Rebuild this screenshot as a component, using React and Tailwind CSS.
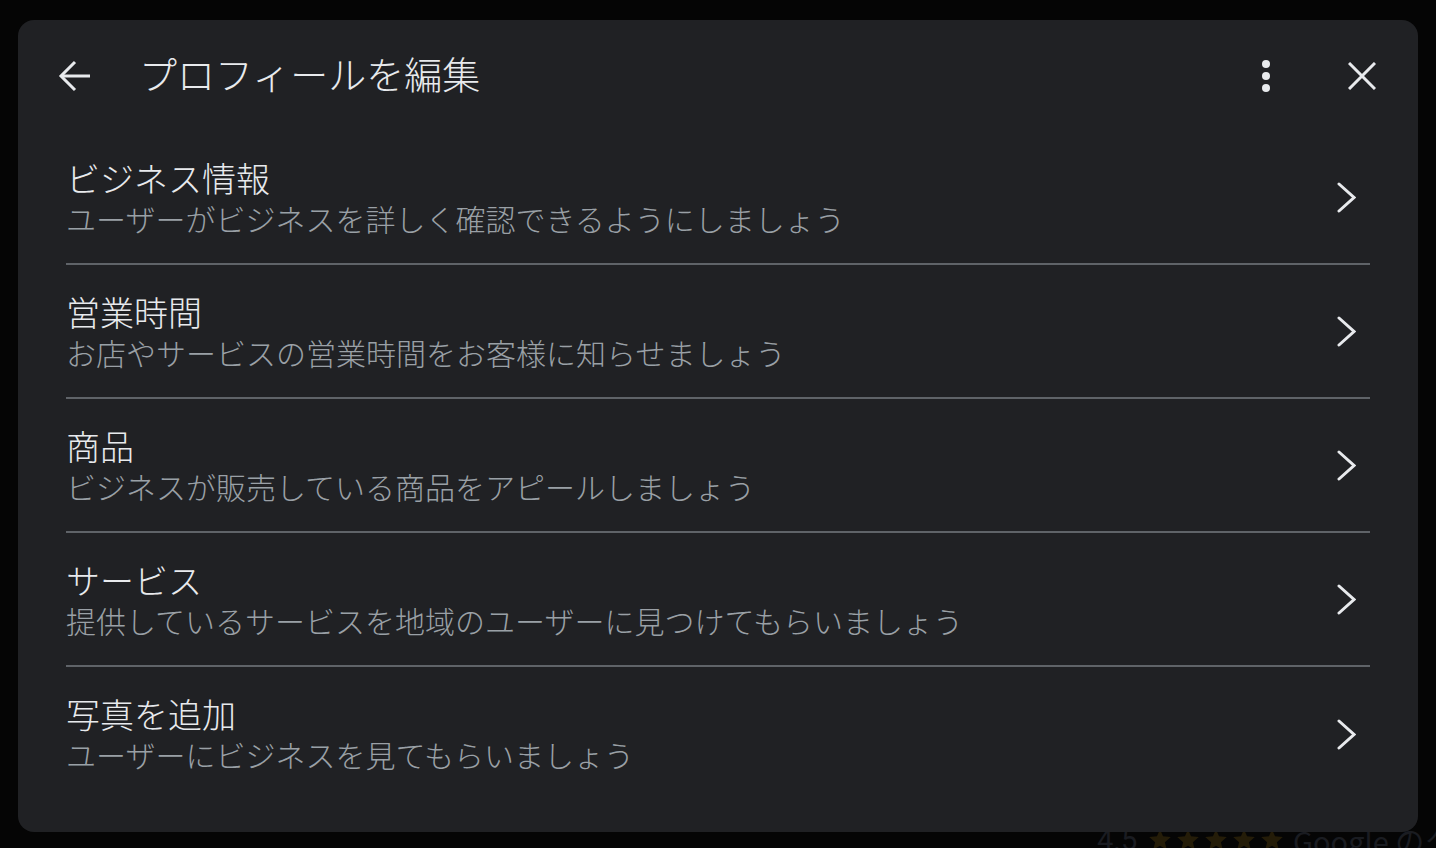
import React from "react";

const rows = [
  { title: "ビジネス情報", sub: "ユーザーがビジネスを詳しく確認できるようにしましょう" },
  { title: "営業時間", sub: "お店やサービスの営業時間をお客様に知らせましょう" },
  { title: "商品", sub: "ビジネスが販売している商品をアピールしましょう" },
  { title: "サービス", sub: "提供しているサービスを地域のユーザーに見つけてもらいましょう" },
  { title: "写真を追加", sub: "ユーザーにビジネスを見てもらいましょう" },
];

function BackArrow() {
  return (
    <svg width="32" height="32" viewBox="0 0 32 32" fill="none" stroke="#e8eaed" strokeWidth="3" strokeLinecap="butt">
      <path d="M32 16H3" />
      <path d="M17 2L3 16l14 14" />
    </svg>
  );
}

function Kebab() {
  return (
    <div className="flex flex-col gap-[4px]">
      <span className="w-[8px] h-[8px] rounded-full bg-[#e8eaed]" />
      <span className="w-[8px] h-[8px] rounded-full bg-[#e8eaed]" />
      <span className="w-[8px] h-[8px] rounded-full bg-[#e8eaed]" />
    </div>
  );
}

function CloseX() {
  return (
    <svg width="28" height="28" viewBox="0 0 28 28" fill="none" stroke="#e8eaed" strokeWidth="3">
      <path d="M1 1L27 27M27 1L1 27" />
    </svg>
  );
}

function Chevron() {
  return (
    <svg width="19" height="31" viewBox="0 0 19 31" fill="none" stroke="#e8eaed" strokeWidth="3" strokeLinecap="round">
      <path d="M2 2l15 13.5L2 29" />
    </svg>
  );
}

function Star() {
  return (
    <svg width="26" height="26" viewBox="0 0 24 24" fill="#241c08" className="shrink-0">
      <path d="M12 17.27L18.18 21l-1.64-7.03L22 9.24l-7.19-.61L12 2 9.19 8.63 2 9.24l5.46 4.73L5.82 21z" />
    </svg>
  );
}

export default function App() {
  return (
    <div
      className="relative w-[1436px] h-[848px] bg-[#050505] overflow-hidden flex flex-col justify-end"
      style={{ fontFamily: '"Noto Sans CJK JP", "Noto Sans", sans-serif' }}
    >
      {/* dimmed page behind the dialog */}
      <div className="flex items-center pl-[1097px] translate-y-[12px] text-[#1a1c21] text-[29px] leading-[40px] whitespace-nowrap">
        <span className="w-[50px] shrink-0" style={{ fontFamily: "Roboto, sans-serif" }}>4.5</span>
        <div className="flex gap-[2px] w-[146px] shrink-0">
          <Star />
          <Star />
          <Star />
          <Star />
          <Star />
        </div>
        <span className="shrink-0">Google のクチコミ</span>
      </div>

      <div className="absolute left-[18px] top-[20px] w-[1400px] h-[812px] rounded-2xl bg-[#202124] flex flex-col">
        <div className="h-[111px] flex items-center pl-[40px] pr-[42px]">
          <BackArrow />
          <h1 className="ml-[49px] -mt-[6px] text-[38px] leading-[48px] text-[#e8eaed] font-light">プロフィールを編集</h1>
          <div className="flex-1" />
          <Kebab />
          <div className="ml-[78px]">
            <CloseX />
          </div>
        </div>

        <div className="px-[48px] flex flex-col">
          {rows.map((r, i) => (
            <div
              key={r.title}
              className={
                "h-[134px] flex items-center " +
                (i < rows.length - 1 ? "border-b-2 border-[#5f6368]" : "")
              }
            >
              <div className="flex-1 self-start pt-[27px]">
                <div className="text-[34px] leading-[40px] text-[#e8eaed] font-light">{r.title}</div>
                <div className="text-[30px] leading-[40px] text-[#9aa0a6] font-light">{r.sub}</div>
              </div>
              <div className="mr-[14px]">
                <Chevron />
              </div>
            </div>
          ))}
        </div>
      </div>
    </div>
  );
}
